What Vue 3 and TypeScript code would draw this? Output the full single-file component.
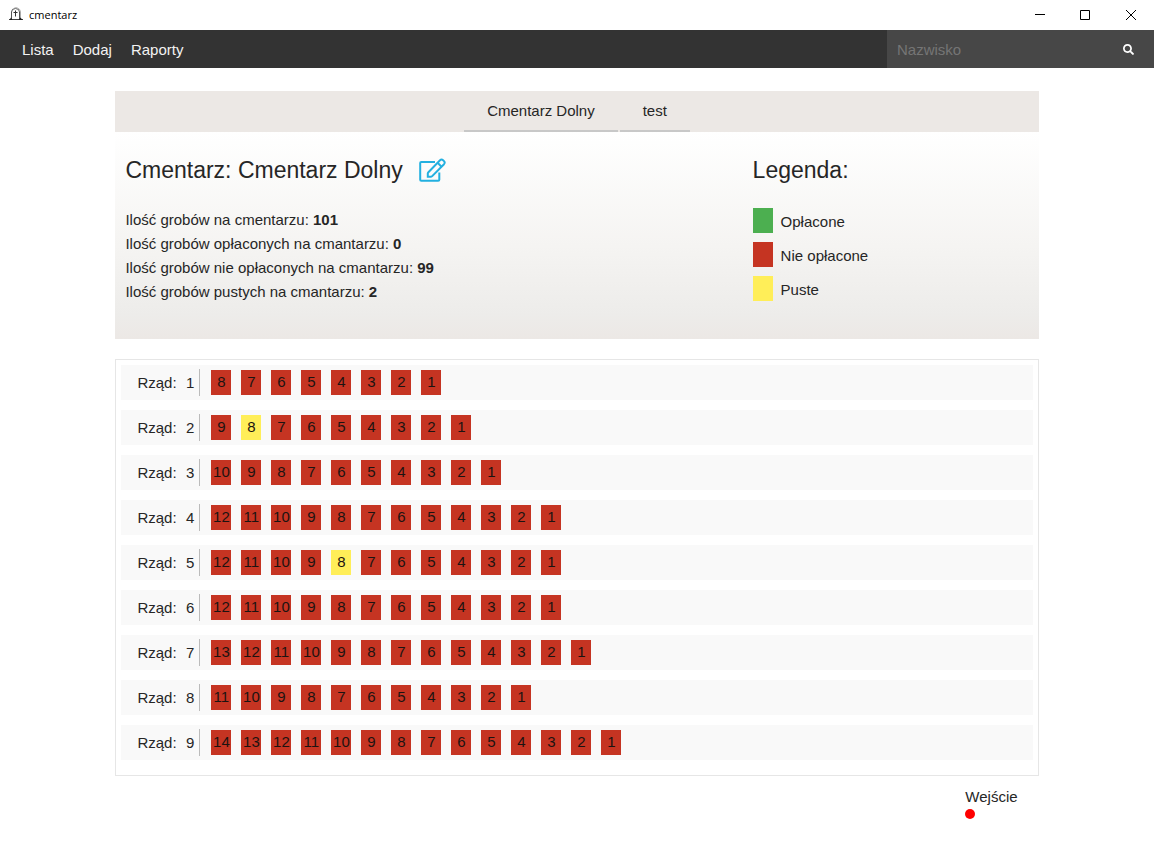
<script setup lang="ts">
import { ref } from 'vue'

interface Row {
  id: number
  count: number
  empty: number[]
}

interface Stat {
  label: string
  value: number
}

const navItems: string[] = ['Lista', 'Dodaj', 'Raporty']
const cemeteries: string[] = ['Cmentarz Dolny', 'test']
const active = ref<string>('Cmentarz Dolny')
const surname = ref<string>('')

const stats: Stat[] = [
  { label: 'Ilość grobów na cmentarzu:', value: 101 },
  { label: 'Ilość grobów opłaconych na cmantarzu:', value: 0 },
  { label: 'Ilość grobów nie opłaconych na cmantarzu:', value: 99 },
  { label: 'Ilość grobów pustych na cmantarzu:', value: 2 },
]

const legend = [
  { name: 'Opłacone', kind: 'paid' },
  { name: 'Nie opłacone', kind: 'unpaid' },
  { name: 'Puste', kind: 'empty' },
]

const rows: Row[] = [
  { id: 1, count: 8, empty: [] },
  { id: 2, count: 9, empty: [8] },
  { id: 3, count: 10, empty: [] },
  { id: 4, count: 12, empty: [] },
  { id: 5, count: 12, empty: [8] },
  { id: 6, count: 12, empty: [] },
  { id: 7, count: 13, empty: [] },
  { id: 8, count: 11, empty: [] },
  { id: 9, count: 14, empty: [] },
]

const graves = (row: Row): number[] => Array.from({ length: row.count }, (_, i) => row.count - i)
</script>

<template>
  <div class="window">
    <header class="titlebar">
      <svg class="logo" viewBox="0 0 16 16" width="16" height="16" aria-hidden="true">
        <path d="M3.5 12.5V5Q3.5 1.5 7.5 1.5T11.5 5V12.5" fill="none" stroke="#555" />
        <path d="M12.5 12.5V5Q12.5 2 9 .8H6.5" fill="none" stroke="#aaa" />
        <path d="M7.5 3.5V9.5M5.5 5.5H9.5" fill="none" stroke="#333" />
        <path d="M1 12.5H15" stroke="#444" />
        <path d="M1.5 13L3 10.5L4.5 13M10.5 13L12.5 10.5L14.5 13" fill="#222" />
      </svg>
      <span class="app-name">cmentarz</span>
      <div class="controls">
        <button type="button" aria-label="Minimalizuj">
          <svg viewBox="0 0 11 11" width="11" height="11"><path d="M1 4.5H11" /></svg>
        </button>
        <button type="button" aria-label="Maksymalizuj">
          <svg viewBox="0 0 11 11" width="11" height="11"><path d="M.5 .5H9.5V9.5H.5Z" /></svg>
        </button>
        <button type="button" aria-label="Zamknij">
          <svg viewBox="0 0 11 11" width="11" height="11"><path d="M0 0L10 10M10 0L0 10" /></svg>
        </button>
      </div>
    </header>

    <nav class="navbar">
      <div class="links">
        <a v-for="item in navItems" :key="item" href="#">{{ item }}</a>
      </div>
      <form class="search" @submit.prevent>
        <input v-model="surname" type="text" placeholder="Nazwisko" aria-label="Nazwisko" />
        <button type="submit" aria-label="Szukaj">
          <svg viewBox="0 0 512 512" width="11" height="11">
            <path
              d="M505 442.7L405.3 343c-4.5-4.5-10.6-7-17-7H372c27.6-35.3 44-79.7 44-128C416 93.1 322.9 0 208 0S0 93.1 0 208s93.1 208 208 208c48.3 0 92.7-16.4 128-44v16.3c0 6.4 2.5 12.5 7 17l99.7 99.7c9.4 9.4 24.6 9.4 33.9 0l28.3-28.3c9.4-9.4 9.4-24.6.1-34zM208 336c-70.7 0-128-57.2-128-128 0-70.7 57.2-128 128-128 70.7 0 128 57.2 128 128 0 70.7-57.2 128-128 128z"
            />
          </svg>
        </button>
      </form>
    </nav>

    <main class="page">
      <div class="tabs">
        <button v-for="name in cemeteries" :key="name" type="button" @click="active = name">{{ name }}</button>
      </div>

      <section class="info">
        <div>
          <h1>
            Cmentarz: {{ active }}
            <a href="#" class="edit" aria-label="Edytuj">
              <svg viewBox="0 0 27 24" width="27" height="24">
                <path d="M16 4H2.3Q1.2 4 1.2 5.1V21.7Q1.2 22.8 2.3 22.8H19.2Q20.3 22.8 20.3 21.7V14.5" />
                <path d="M8.8 18.8V15.6Q8.8 14.8 9.4 14.2L21 2.2Q22.5 .8 24.1 2.2L25 3.1Q26.4 4.6 25 6.2L13.2 18.1Q12.5 18.8 11.6 18.8Z" />
                <path d="M18.6 4.8L22.5 8.7" />
              </svg>
            </a>
          </h1>
          <p v-for="s in stats" :key="s.label">{{ s.label }} <b>{{ s.value }}</b></p>
        </div>
        <div>
          <h2>Legenda:</h2>
          <ul class="legend">
            <li v-for="l in legend" :key="l.kind"><span class="swatch" :class="l.kind"></span>{{ l.name }}</li>
          </ul>
        </div>
      </section>

      <section class="board">
        <div v-for="row in rows" :key="row.id" class="row">
          <div class="row-label"><span>Rząd:</span><span>{{ row.id }}</span></div>
          <button
            v-for="n in graves(row)"
            :key="n"
            type="button"
            class="grave"
            :class="row.empty.includes(n) ? 'empty' : 'unpaid'"
          >{{ n }}</button>
        </div>
      </section>

      <div class="entrance">
        <div>
          <span>Wejście</span>
          <span class="dot"></span>
        </div>
      </div>
    </main>
  </div>
</template>

<style>
body {
  margin: 0;
  background: #fff;
}
</style>

<style scoped>
.window {
  font: 15px/24px "Liberation Sans", Arial, sans-serif;
  color: #262626;
}
button,
input {
  font: inherit;
  color: inherit;
  border: 0;
  padding: 0;
  margin: 0;
  background: none;
  border-radius: 0;
}
.titlebar {
  display: flex;
  align-items: center;
  height: 30px;
  padding-left: 8px;
}
.app-name {
  margin-left: 5px;
  font: 11px/16px "Open Sans", "Noto Sans", sans-serif;
  color: #000;
}
.controls {
  display: flex;
  margin-left: auto;
}
.controls button {
  display: flex;
  align-items: center;
  justify-content: center;
  width: 46px;
  height: 30px;
}
.controls svg {
  display: block;
}
.controls path {
  fill: none;
  stroke: #000;
}
.navbar {
  display: flex;
  justify-content: space-between;
  height: 38px;
  background: #333;
}
.links {
  display: flex;
  gap: 19px;
  padding-left: 22px;
  line-height: 40px;
}
.links a {
  color: #f2f2f2;
  text-decoration: none;
}
.search {
  display: flex;
  width: 267px;
  background: #474747;
}
.search input {
  flex: 1;
  min-width: 0;
  padding: 2px 10px 0;
  color: #eee;
}
.search input::placeholder {
  color: #757575;
  opacity: 1;
}
.search button {
  display: flex;
  align-items: center;
  justify-content: center;
  width: 51px;
}
.search svg {
  fill: #fff;
}
.page {
  width: 80%;
  margin: 23px auto 0;
}
.tabs {
  display: flex;
  justify-content: center;
  gap: 2px;
  background: #ece8e5;
}
.tabs button {
  padding: 8px 23px 7px;
  border-bottom: 2px solid #c8c8c8;
}
.info {
  display: grid;
  grid-template-columns: 25fr 11fr;
  padding: 20px 10px 35px;
  background: linear-gradient(#fff, #f5f4f2 55%, #edecea 88%, #ece8e5);
}
h1,
h2 {
  display: flex;
  align-items: center;
  margin: 0 0 20px;
  font-size: 23px;
  line-height: 36px;
  font-weight: 400;
}
.edit {
  display: flex;
  margin-left: 16px;
}
.edit svg {
  fill: none;
  stroke: #23b0e0;
  stroke-width: 2;
}
p {
  margin: 0;
}
.legend {
  display: grid;
  gap: 9px;
  margin: 0;
  padding: 0;
  list-style: none;
}
.legend li {
  display: flex;
  gap: 8px;
  line-height: 28px;
  height: 25px;
}
.swatch {
  width: 20px;
  height: 25px;
}
.paid {
  background: #4caf50;
}
.unpaid {
  background: #c53422;
}
.empty {
  background: #ffee58;
}
.board {
  margin-top: 20px;
  padding: 5px 5px 15px;
  display: grid;
  gap: 10px;
  border: 1px solid #e6e6e6;
}
.row {
  display: flex;
  align-items: center;
  gap: 10px;
  height: 35px;
  background: #f9f9f9;
}
.row-label {
  display: flex;
  justify-content: space-between;
  width: 57px;
  margin-left: 16px;
  margin-right: 1px;
  padding-right: 5px;
  line-height: 27px;
  border-right: 1px solid #bbb;
}
.grave {
  width: 20px;
  height: 25px;
  padding-bottom: 2px;
  line-height: 23px;
  text-align: center;
  color: #1c1311;
}
.entrance {
  display: flex;
  justify-content: flex-end;
  padding: 9px 21px 40px;
}
.entrance span {
  display: block;
}
.entrance .dot {
  width: 10px;
  height: 10px;
  border-radius: 50%;
  background: #f00;
}
</style>
